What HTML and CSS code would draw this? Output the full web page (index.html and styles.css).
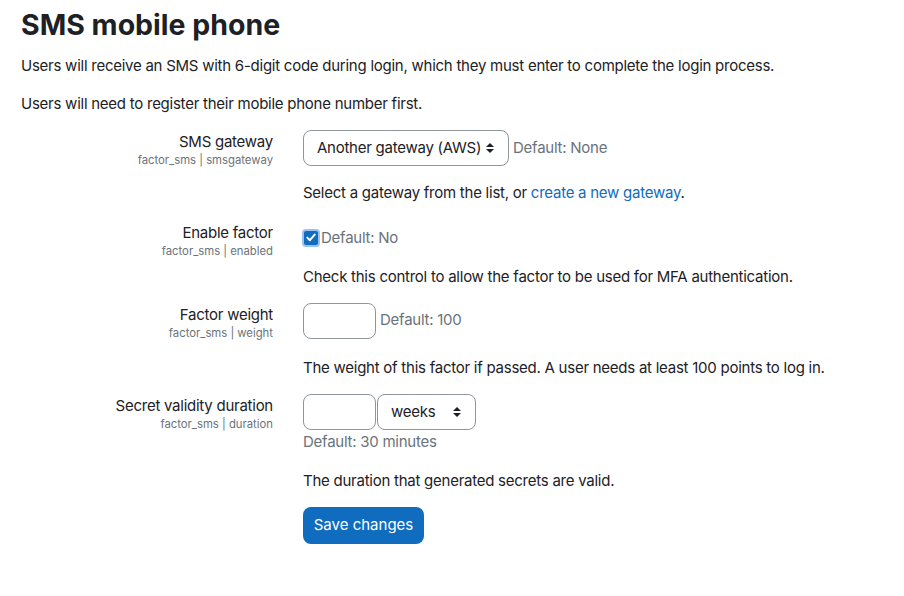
FILE: index.html
```
<!DOCTYPE html>
<html lang="en">
<head>
  <meta charset="UTF-8">
  <meta name="viewport" content="width=device-width, initial-scale=1.0"/>
  <title>SMS mobile phone</title>
  <link rel="stylesheet" href="styles.css">
</head>
<body>
  <div class="page">
    <h2>SMS mobile phone</h2>
    <p>Users will receive an SMS with 6-digit code during login, which they must enter to complete the login process.</p>
    <p>Users will need to register their mobile phone number first.</p>

    <form class="settings">
      <!-- SMS gateway -->
      <div class="setting">
        <div class="setting-label">
          <label for="gateway">SMS gateway</label>
          <span class="shortname">factor_sms | smsgateway</span>
        </div>
        <div class="setting-control">
          <div class="control-line">
            <div class="select-box gateway-select">Another gateway (AWS) <span class="arrows"></span></div>
            <span class="default">Default: None</span>
          </div>
          <div class="description">Select a gateway from the list, or <a href="#">create a new gateway</a>.</div>
        </div>
      </div>

      <!-- Enable factor -->
      <div class="setting setting-check">
        <div class="setting-label">
          <label for="enabled">Enable factor</label>
          <span class="shortname">factor_sms | enabled</span>
        </div>
        <div class="setting-control">
          <div class="control-line check-line">
            <span class="checkbox">
              <svg width="10" height="9" viewBox="0 0 10 9"><path d="M1.3 4.6 L3.9 7.2 L8.7 1.6" fill="none" stroke="#fff" stroke-width="2" stroke-linecap="round" stroke-linejoin="round"/></svg>
            </span>
            <span class="default">Default: No</span>
          </div>
          <div class="description">Check this control to allow the factor to be used for MFA authentication.</div>
        </div>
      </div>

      <!-- Factor weight -->
      <div class="setting setting-text">
        <div class="setting-label">
          <label for="weight">Factor weight</label>
          <span class="shortname">factor_sms | weight</span>
        </div>
        <div class="setting-control">
          <div class="control-line">
            <input type="text" id="weight" class="text-input">
            <span class="default">Default: 100</span>
          </div>
          <div class="description">The weight of this factor if passed. A user needs at least 100 points to log in.</div>
        </div>
      </div>

      <!-- Secret validity duration -->
      <div class="setting setting-duration">
        <div class="setting-label">
          <label for="duration">Secret validity duration</label>
          <span class="shortname">factor_sms | duration</span>
        </div>
        <div class="setting-control">
          <div class="control-line duration-line">
            <input type="text" id="duration" class="text-input">
            <div class="select-box unit-select">weeks <span class="arrows"></span></div>
          </div>
          <div class="default block">Default: 30 minutes</div>
          <div class="description">The duration that generated secrets are valid.</div>
        </div>
      </div>

      <div class="setting buttons">
        <div class="setting-label"></div>
        <div class="setting-control">
          <button type="button">Save changes</button>
        </div>
      </div>
    </form>
  </div>
</body>
</html>
```

FILE: styles.css
```
* {
  box-sizing: border-box;
  margin: 0;
  padding: 0;
}

body {
  font-family: Inter, "Noto Sans", sans-serif;
  font-size: 15px;
  line-height: 1.5;
  letter-spacing: -0.25px;
  color: #1d2125;
  background: #fff;
}

.page {
  padding: 8px 21px 20px;
}

h2 {
  font-size: 28.5px;
  font-weight: 700;
  line-height: 1.2;
  letter-spacing: 0;
  margin-bottom: 13px;
}

p {
  margin-bottom: 15px;
}

a {
  color: #0f6cbf;
  text-decoration: none;
}

.settings {
  margin-top: 15px;
}

.setting {
  display: flex;
  gap: 30px;
  margin-bottom: 16px;
}

.setting-check {
  margin-bottom: 14px;
}

.setting-text {
  margin-bottom: 15px;
}

.setting-duration {
  margin-bottom: 14px;
}

.setting-label {
  width: 252px;
  flex-shrink: 0;
  text-align: right;
  padding-top: 1px;
}

.setting-label label {
  display: block;
  line-height: 22px;
}

.shortname {
  display: block;
  font-size: 11.3px;
  line-height: 14px;
  letter-spacing: 0;
  color: #6a737b;
}

.control-line {
  display: flex;
  align-items: center;
  gap: 4px;
  height: 36px;
}

.check-line {
  height: auto;
  padding-top: 6px;
  gap: 0;
}

.duration-line {
  gap: 1px;
}

.default {
  color: #6a737b;
}

.default.block {
  display: block;
  line-height: 22px;
  margin-top: 1px;
}

.description {
  margin-top: 16px;
  line-height: 22.5px;
}

.check-line + .description {
  margin-top: 17px;
}

.setting-text .description {
  margin-top: 18px;
}

.duration-line + .default + .description {
  margin-top: 17px;
}

.select-box {
  display: flex;
  align-items: center;
  justify-content: space-between;
  height: 36px;
  padding: 0 13px;
  border: 1px solid #8f959e;
  border-radius: 8px;
  background: #fff;
  color: #1d2125;
}

.gateway-select {
  width: 206px;
}

.unit-select {
  width: 99px;
}

.arrows {
  position: relative;
  width: 10px;
  height: 12px;
}

.arrows::before,
.arrows::after {
  content: "";
  position: absolute;
  left: 1px;
  border-left: 4px solid transparent;
  border-right: 4px solid transparent;
}

.arrows::before {
  top: 1px;
  border-bottom: 4px solid #1d2125;
}

.arrows::after {
  bottom: 1px;
  border-top: 4px solid #1d2125;
}

.text-input {
  width: 73px;
  height: 36px;
  border: 1px solid #8f959e;
  border-radius: 8px;
  background: #fff;
  font: inherit;
  outline: none;
}

.checkbox {
  display: flex;
  align-items: center;
  justify-content: center;
  width: 14px;
  height: 14px;
  margin: 2px 3px 2px 1px;
  border-radius: 2px;
  background: #0f6cbf;
  box-shadow: 0 0 0 2px #9dc1f0;
}

button {
  font: inherit;
  color: #fff;
  background: #0f6cbf;
  border: none;
  border-radius: 8px;
  width: 121px;
  height: 37px;
  cursor: pointer;
}
```
